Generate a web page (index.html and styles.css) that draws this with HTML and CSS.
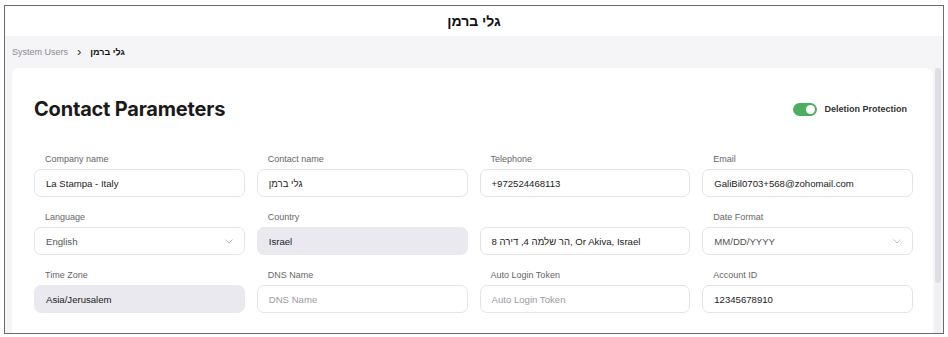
FILE: index.html
```html
<!DOCTYPE html>
<html lang="en">

<head>
    <meta charset="UTF-8">
    <meta name="viewport" content="width=device-width, initial-scale=1.0">
    <title>Contact Parameters</title>
    <link rel="stylesheet" href="styles.css">
</head>

<body>
    <div class="frame">
        <div class="header">
            <h1 dir="rtl">גלי ברמן</h1>
        </div>
        <div class="page">
            <div class="breadcrumb">
                <span class="crumb">System Users</span>
                <span class="sep">&rsaquo;</span>
                <span class="crumb current" dir="rtl">גלי ברמן</span>
            </div>
            <div class="body-row">
                <div class="card">
                    <div class="card-head">
                        <h2>Contact Parameters</h2>
                        <div class="toggle-wrap">
                            <span class="toggle"><span class="knob"></span></span>
                            <span class="toggle-label">Deletion Protection</span>
                        </div>
                    </div>
                    <div class="fields">
                        <div class="field">
                            <label>Company name</label>
                            <div class="input">La Stampa - Italy</div>
                        </div>
                        <div class="field">
                            <label>Contact name</label>
                            <div class="input"><span dir="rtl">גלי ברמן</span></div>
                        </div>
                        <div class="field">
                            <label>Telephone</label>
                            <div class="input">+972524468113</div>
                        </div>
                        <div class="field">
                            <label>Email</label>
                            <div class="input">GaliBil0703+568@zohomail.com</div>
                        </div>

                        <div class="field">
                            <label>Language</label>
                            <div class="input select">English
                                <svg class="chev" width="8" height="5" viewBox="0 0 8 5"><path d="M0.5 0.5l3.5 3.5 3.5-3.5" fill="none" stroke="#bdbdc3" stroke-width="1"/></svg>
                            </div>
                        </div>
                        <div class="field">
                            <label>Country</label>
                            <div class="input disabled">Israel</div>
                        </div>
                        <div class="field">
                            <label>&nbsp;</label>
                            <div class="input"><span dir="rtl">הר שלמה 4, דירה 8</span>, Or Akiva, Israel</div>
                        </div>
                        <div class="field">
                            <label>Date Format</label>
                            <div class="input select">MM/DD/YYYY
                                <svg class="chev" width="8" height="5" viewBox="0 0 8 5"><path d="M0.5 0.5l3.5 3.5 3.5-3.5" fill="none" stroke="#bdbdc3" stroke-width="1"/></svg>
                            </div>
                        </div>

                        <div class="field">
                            <label>Time Zone</label>
                            <div class="input disabled">Asia/Jerusalem</div>
                        </div>
                        <div class="field">
                            <label>DNS Name</label>
                            <div class="input placeholder">DNS Name</div>
                        </div>
                        <div class="field">
                            <label>Auto Login Token</label>
                            <div class="input placeholder">Auto Login Token</div>
                        </div>
                        <div class="field">
                            <label>Account ID</label>
                            <div class="input">12345678910</div>
                        </div>
                    </div>
                </div>
                <div class="scrollbar"><div class="thumb"></div></div>
            </div>
        </div>
    </div>
</body>

</html>
```

FILE: styles.css
```css
body {
    margin: 0;
    font-family: "Liberation Sans", Arial, sans-serif;
    background-color: #fff;
    color: #222;
}

.frame {
    margin: 5px 4px 0 4px;
    height: 329px;
    border: 1px solid #6b6b6b;
    box-sizing: border-box;
    display: flex;
    flex-direction: column;
    overflow: hidden;
}

.header {
    height: 30px;
    display: flex;
    align-items: center;
    justify-content: center;
    background-color: #fff;
    flex-shrink: 0;
}

.header h1 {
    margin: 0;
    font-size: 14px;
    font-weight: bold;
    color: #111;
}

.page {
    flex: 1;
    background-color: #f5f5f7;
    display: flex;
    flex-direction: column;
    min-height: 0;
}

.breadcrumb {
    height: 32px;
    display: flex;
    align-items: center;
    gap: 8px;
    padding-left: 7px;
    font-size: 9px;
    flex-shrink: 0;
}

.crumb {
    color: #8a8a90;
}

.crumb.current {
    color: #111;
    font-weight: bold;
}

.sep {
    font-size: 13px;
    color: #333;
    margin: 0 1px;
    line-height: 1;
    position: relative;
    top: -1px;
}

.body-row {
    flex: 1;
    min-height: 0;
    display: flex;
    padding-left: 7px;
    gap: 2px;
}

.card {
    width: 921px;
    box-sizing: border-box;
    background-color: #fff;
    border-radius: 8px 8px 0 0;
    padding: 20px 20px 30px 22px;
    flex-shrink: 0;
}

.scrollbar {
    width: 6px;
    background-color: #f0f0f3;
}

.thumb {
    height: 215px;
    background-color: #dedee4;
    border-radius: 3px;
}

.card-head {
    display: flex;
    justify-content: space-between;
    align-items: center;
    height: 42px;
    margin-bottom: 24px;
}

.card-head h2 {
    margin: 0;
    font-family: Inter, "Liberation Sans", sans-serif;
    font-size: 20px;
    font-weight: bold;
    color: #1a1a1a;
    letter-spacing: -0.2px;
}

.toggle-wrap {
    display: flex;
    align-items: center;
    gap: 7px;
    margin-right: 6px;
}

.toggle {
    width: 24px;
    height: 13px;
    border-radius: 7px;
    background-color: #4caf60;
    position: relative;
}

.knob {
    position: absolute;
    right: 2px;
    top: 2px;
    width: 9px;
    height: 9px;
    border-radius: 50%;
    background-color: #fff;
}

.toggle-label {
    font-size: 9px;
    font-weight: bold;
    color: #333;
}

.fields {
    display: grid;
    grid-template-columns: repeat(4, 1fr);
    column-gap: 12px;
    row-gap: 15px;
}

.field label {
    display: block;
    font-size: 9px;
    color: #666;
    padding-left: 11px;
    height: 11px;
    margin-bottom: 4px;
}

.input {
    height: 28px;
    box-sizing: border-box;
    border: 1px solid #e4e4e8;
    border-radius: 7px;
    padding: 0 11px;
    display: flex;
    align-items: center;
    font-size: 9.6px;
    color: #222;
    background-color: #fff;
    white-space: nowrap;
}

.input.disabled {
    background-color: #e9e9ef;
    border-color: #e9e9ef;
}

.input.placeholder {
    color: #9a9aa0;
}

.input.select {
    justify-content: space-between;
    color: #555;
}

.chev {
    margin-right: 0;
}
```
